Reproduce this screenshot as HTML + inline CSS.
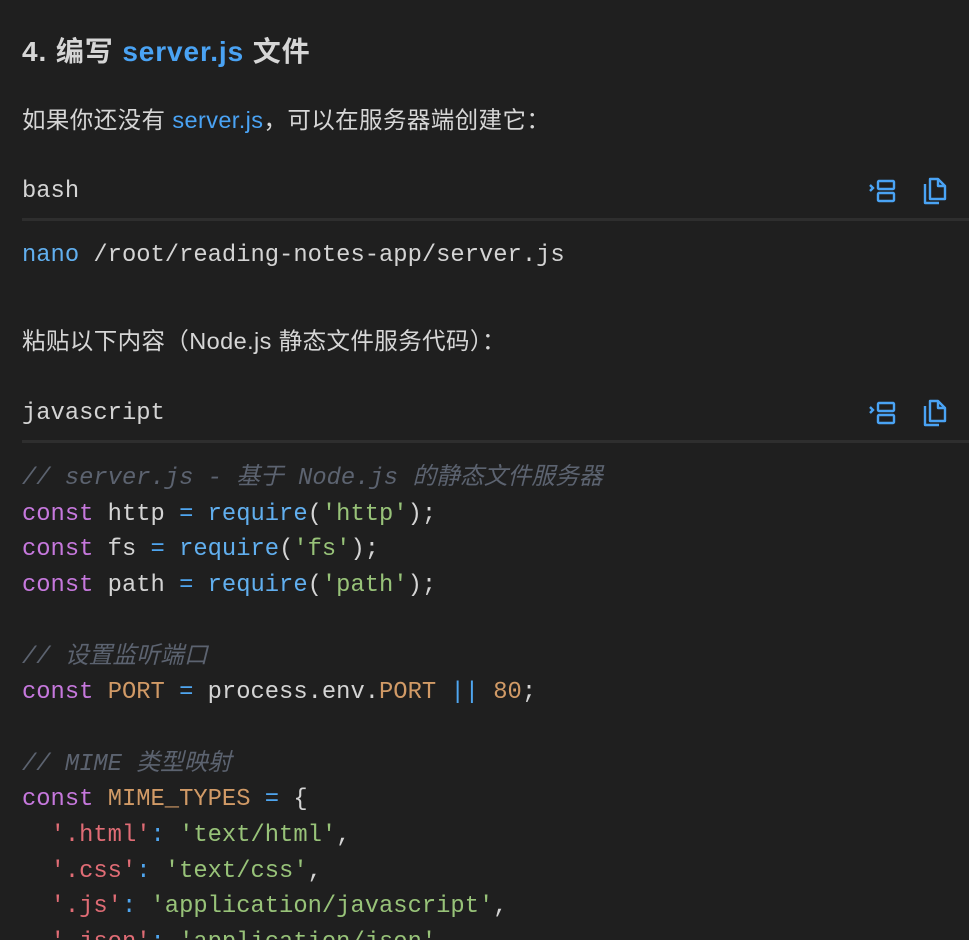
<!DOCTYPE html>
<html><head><meta charset="utf-8"><style>
html,body{margin:0;padding:0;background:#1f1f1f;width:969px;height:940px;overflow:hidden}
body{position:relative;color:#d4d4d4;font-family:"Liberation Sans","Noto Sans CJK SC",sans-serif}
.a{position:absolute;left:22px;white-space:pre}
h1{position:absolute;left:22px;top:32px;margin:0;font-size:28px;font-weight:bold;color:#d6d6d6;line-height:40px;letter-spacing:0.9px}
.b{color:#4aa3f4}
.p{font-size:23.5px;line-height:30px;color:#d6d6d6;letter-spacing:0.4px}
.m{font-family:"Liberation Mono","Noto Sans CJK SC",monospace;font-size:23.8px;line-height:35.7px;color:#d4d4d4}
.sep{position:absolute;left:22px;right:0;height:3px;background:#2e2e2e}
.ic{position:absolute}
.k{color:#c678dd}.f{color:#61afef}.s{color:#98c379}.o{color:#d19a66}.c{color:#5c6370;font-style:italic}.r{color:#e06c75}.op{color:#4fa6f0}
</style></head><body>
<h1>4. 编写 <span class="b">server.js</span> 文件</h1>
<div class="a p" style="top:105px">如果你还没有 <span class="b">server.js</span>，可以在服务器端创建它：</div>
<div class="a m" style="top:174px">bash</div>
<svg class="ic" style="left:869px;top:179px" width="28" height="26" viewBox="0 0 28 26" fill="none" stroke="#4aa3f4" stroke-width="2.4"><path d="M1 6l3 3-3 3"/><rect x="9" y="2" width="16" height="8" rx="1"/><rect x="9" y="14" width="16" height="8" rx="1"/></svg>
<svg class="ic" style="left:921px;top:177px" width="28" height="30" viewBox="0 0 28 30" fill="none" stroke="#4aa3f4" stroke-width="2.4" stroke-linejoin="round"><path d="M9 2h8l7 7v13H9z"/><path d="M17 2v7h7"/><path d="M4 7v19h14"/></svg>
<div class="sep" style="top:218px"></div>
<div class="a m" style="top:238px"><span class="f">nano</span> /root/reading-notes-app/server.js</div>
<div class="a p" style="top:326px">粘贴以下内容（Node.js 静态文件服务代码）：</div>
<div class="a m" style="top:396px">javascript</div>
<svg class="ic" style="left:869px;top:401px" width="28" height="26" viewBox="0 0 28 26" fill="none" stroke="#4aa3f4" stroke-width="2.4"><path d="M1 6l3 3-3 3"/><rect x="9" y="2" width="16" height="8" rx="1"/><rect x="9" y="14" width="16" height="8" rx="1"/></svg>
<svg class="ic" style="left:921px;top:399px" width="28" height="30" viewBox="0 0 28 30" fill="none" stroke="#4aa3f4" stroke-width="2.4" stroke-linejoin="round"><path d="M9 2h8l7 7v13H9z"/><path d="M17 2v7h7"/><path d="M4 7v19h14"/></svg>
<div class="sep" style="top:440px"></div>
<div class="a m" style="top:461px"><span class="c">// server.js - 基于 Node.js 的静态文件服务器</span>
<span class="k">const</span> http <span class="op">=</span> <span class="f">require</span>(<span class="s">'http'</span>);
<span class="k">const</span> fs <span class="op">=</span> <span class="f">require</span>(<span class="s">'fs'</span>);
<span class="k">const</span> path <span class="op">=</span> <span class="f">require</span>(<span class="s">'path'</span>);

<span class="c">// 设置监听端口</span>
<span class="k">const</span> <span class="o">PORT</span> <span class="op">=</span> process.env.<span class="o">PORT</span> <span class="op">||</span> <span class="o">80</span>;

<span class="c">// MIME 类型映射</span>
<span class="k">const</span> <span class="o">MIME_TYPES</span> <span class="op">=</span> {
  <span class="r">'.html'</span><span class="op">:</span> <span class="s">'text/html'</span>,
  <span class="r">'.css'</span><span class="op">:</span> <span class="s">'text/css'</span>,
  <span class="r">'.js'</span><span class="op">:</span> <span class="s">'application/javascript'</span>,
  <span class="r">'.json'</span><span class="op">:</span> <span class="s">'application/json'</span>,</div>
</body></html>
